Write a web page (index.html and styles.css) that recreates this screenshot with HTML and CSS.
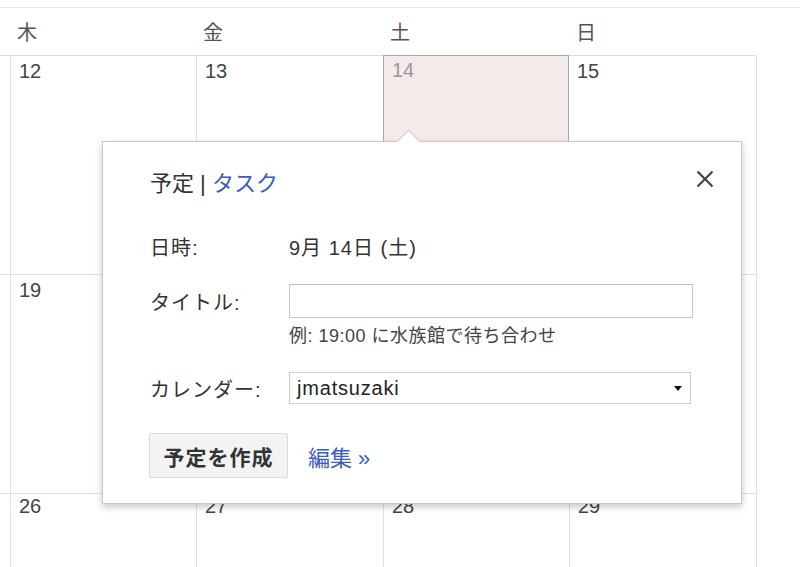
FILE: index.html
```html
<!DOCTYPE html>
<html lang="ja">
<head>
<meta charset="utf-8">
<link rel="stylesheet" href="styles.css">
</head>
<body>
<div class="cal">
  <div class="top-rule"></div>
  <div class="head">
    <div class="hcell edge"></div>
    <div class="hcell">木</div>
    <div class="hcell">金</div>
    <div class="hcell">土</div>
    <div class="hcell">日</div>
    <div class="hcell rest"></div>
  </div>
  <div class="week">
    <div class="cell edge"></div>
    <div class="cell"><span class="num">12</span></div>
    <div class="cell"><span class="num">13</span></div>
    <div class="cell sel"><span class="num">14</span></div>
    <div class="cell"><span class="num">15</span></div>
    <div class="cell rest"></div>
  </div>
  <div class="week">
    <div class="cell edge"></div>
    <div class="cell"><span class="num">19</span></div>
    <div class="cell"></div>
    <div class="cell"></div>
    <div class="cell"></div>
    <div class="cell rest"></div>
  </div>
  <div class="week last">
    <div class="cell edge"></div>
    <div class="cell"><span class="num">26</span></div>
    <div class="cell"><span class="num">27</span></div>
    <div class="cell"><span class="num">28</span></div>
    <div class="cell"><span class="num">29</span></div>
    <div class="cell rest"></div>
  </div>

  <div class="popup">
    <div class="arrow"></div>
    <button class="close" aria-label="閉じる">
      <svg width="18" height="18" viewBox="0 0 18 18"><path d="M1.5 1.5 L16.5 16.5 M16.5 1.5 L1.5 16.5" stroke="#444" stroke-width="2.2" fill="none"/></svg>
    </button>
    <div class="tabs">予定 | <a class="link">タスク</a></div>
    <div class="row when">
      <div class="label">日時:</div>
      <div class="value">9月 14日 (土)</div>
    </div>
    <div class="row title">
      <div class="label">タイトル:</div>
      <div class="field"><div class="input"></div></div>
    </div>
    <div class="hint">例: 19:00 に水族館で待ち合わせ</div>
    <div class="row calrow">
      <div class="label">カレンダー:</div>
      <div class="field"><div class="select"><span>jmatsuzaki</span><span class="caret"></span></div></div>
    </div>
    <div class="actions">
      <button class="btn">予定を作成</button>
      <a class="link edit">編集 »</a>
    </div>
  </div>
</div>
</body>
</html>
```
FILE: styles.css
```css
html, body {
  margin: 0;
  padding: 0;
  background: #fff;
}
body {
  font-family: "Liberation Sans", "Noto Sans CJK JP", sans-serif;
  color: #333;
  overflow: hidden;
  width: 800px;
  height: 567px;
}
.cal {
  position: relative;
  width: 800px;
  height: 567px;
  overflow: hidden;
}
.top-rule {
  height: 7px;
  border-bottom: 1px solid #e4e4e4;
}
.head, .week {
  display: grid;
  grid-template-columns: 10px 186px 187px 186px 187px 1fr;
}
.head {
  height: 47px;
  border-bottom: 1px solid #dcdcdc;
}
.head .rest {
  margin-bottom: -1px;
  background: #fff;
}
.hcell {
  font-size: 20px;
  color: #555;
  padding: 13px 0 0 7px;
  line-height: 24px;
}
.hcell.edge { padding: 0; }
.week {
  height: 219px;
}
.cell {
  border-left: 1px solid #e0e0e0;
  border-bottom: 1px solid #e0e0e0;
  padding: 3px 0 0 8px;
}
.week.last .cell {
  padding-top: 0;
}
.cell.edge {
  border-left: none;
  padding: 0;
}
.cell.rest {
  border-bottom: none;
  padding: 0;
}
.num {
  font-size: 20px;
  line-height: 24px;
  color: #444;
}
.cell.sel {
  background: #f4eaea;
  border: 1px solid #a8a8a8;
  padding: 2px 0 0 8px;
  margin-top: -1px;
}
.cell.sel + .cell { border-left: none; }
.sel .num { color: #999; }

.popup {
  position: absolute;
  left: 102px;
  top: 141px;
  width: 640px;
  height: 363px;
  background: #fff;
  border: 1px solid #c8c8c8;
  box-shadow: 0 3px 7px rgba(0, 0, 0, 0.22);
  box-sizing: border-box;
  padding: 27px 0 0 47px;
}
.arrow {
  position: absolute;
  left: 297px;
  top: -9px;
  width: 16px;
  height: 16px;
  background: #fff;
  border-top: 1px solid #c8c8c8;
  border-left: 1px solid #c8c8c8;
  transform: rotate(45deg);
}
.close {
  position: absolute;
  right: 27px;
  top: 28px;
  padding: 0;
  margin: 0;
  border: none;
  background: none;
  width: 18px;
  height: 18px;
  display: block;
}
.close svg { display: block; }
.tabs {
  font-size: 22px;
  line-height: 30px;
  height: 30px;
  color: #333;
}
.link {
  color: #3b5cc0;
  text-decoration: none;
}
.row {
  display: flex;
  align-items: center;
}
.label {
  width: 139px;
  flex: none;
  font-size: 20px;
  letter-spacing: 1px;
  color: #333;
}
.value {
  font-size: 20px;
  letter-spacing: 1px;
  color: #333;
}
.when {
  margin-top: 34px;
  height: 26px;
}
.title {
  margin-top: 25px;
}
.field {
  width: 404px;
}
.input {
  height: 34px;
  box-sizing: border-box;
  border: 1px solid #c9c9c9;
  border-top-color: #bdbdbd;
  background: #fff;
}
.hint {
  margin: 6px 0 0 139px;
  font-size: 18px;
  letter-spacing: 0.5px;
  line-height: 24px;
  height: 24px;
  color: #444;
}
.calrow {
  margin-top: 24px;
}
.select {
  width: 402px;
  height: 32px;
  border: 1px solid #cfcfcf;
  display: flex;
  align-items: center;
  justify-content: space-between;
  padding: 0 8px 0 7px;
  box-sizing: border-box;
  font-size: 20px;
  letter-spacing: 0.8px;
  color: #222;
}
.caret {
  width: 0;
  height: 0;
  border-left: 4px solid transparent;
  border-right: 4px solid transparent;
  border-top: 5px solid #111;
}
.actions {
  margin-top: 29px;
  display: flex;
  align-items: center;
  gap: 20px;
}
.btn {
  height: 45px;
  width: 139px;
  margin-left: -1px;
  background: #f3f3f3;
  border: 1px solid #dcdcdc;
  border-radius: 2px;
  font-family: "Liberation Sans", "Noto Sans CJK JP", sans-serif;
  font-weight: bold;
  font-size: 21px;
  letter-spacing: 1px;
  color: #333;
  padding: 0;
}
.edit {
  font-size: 22px;
}
```
